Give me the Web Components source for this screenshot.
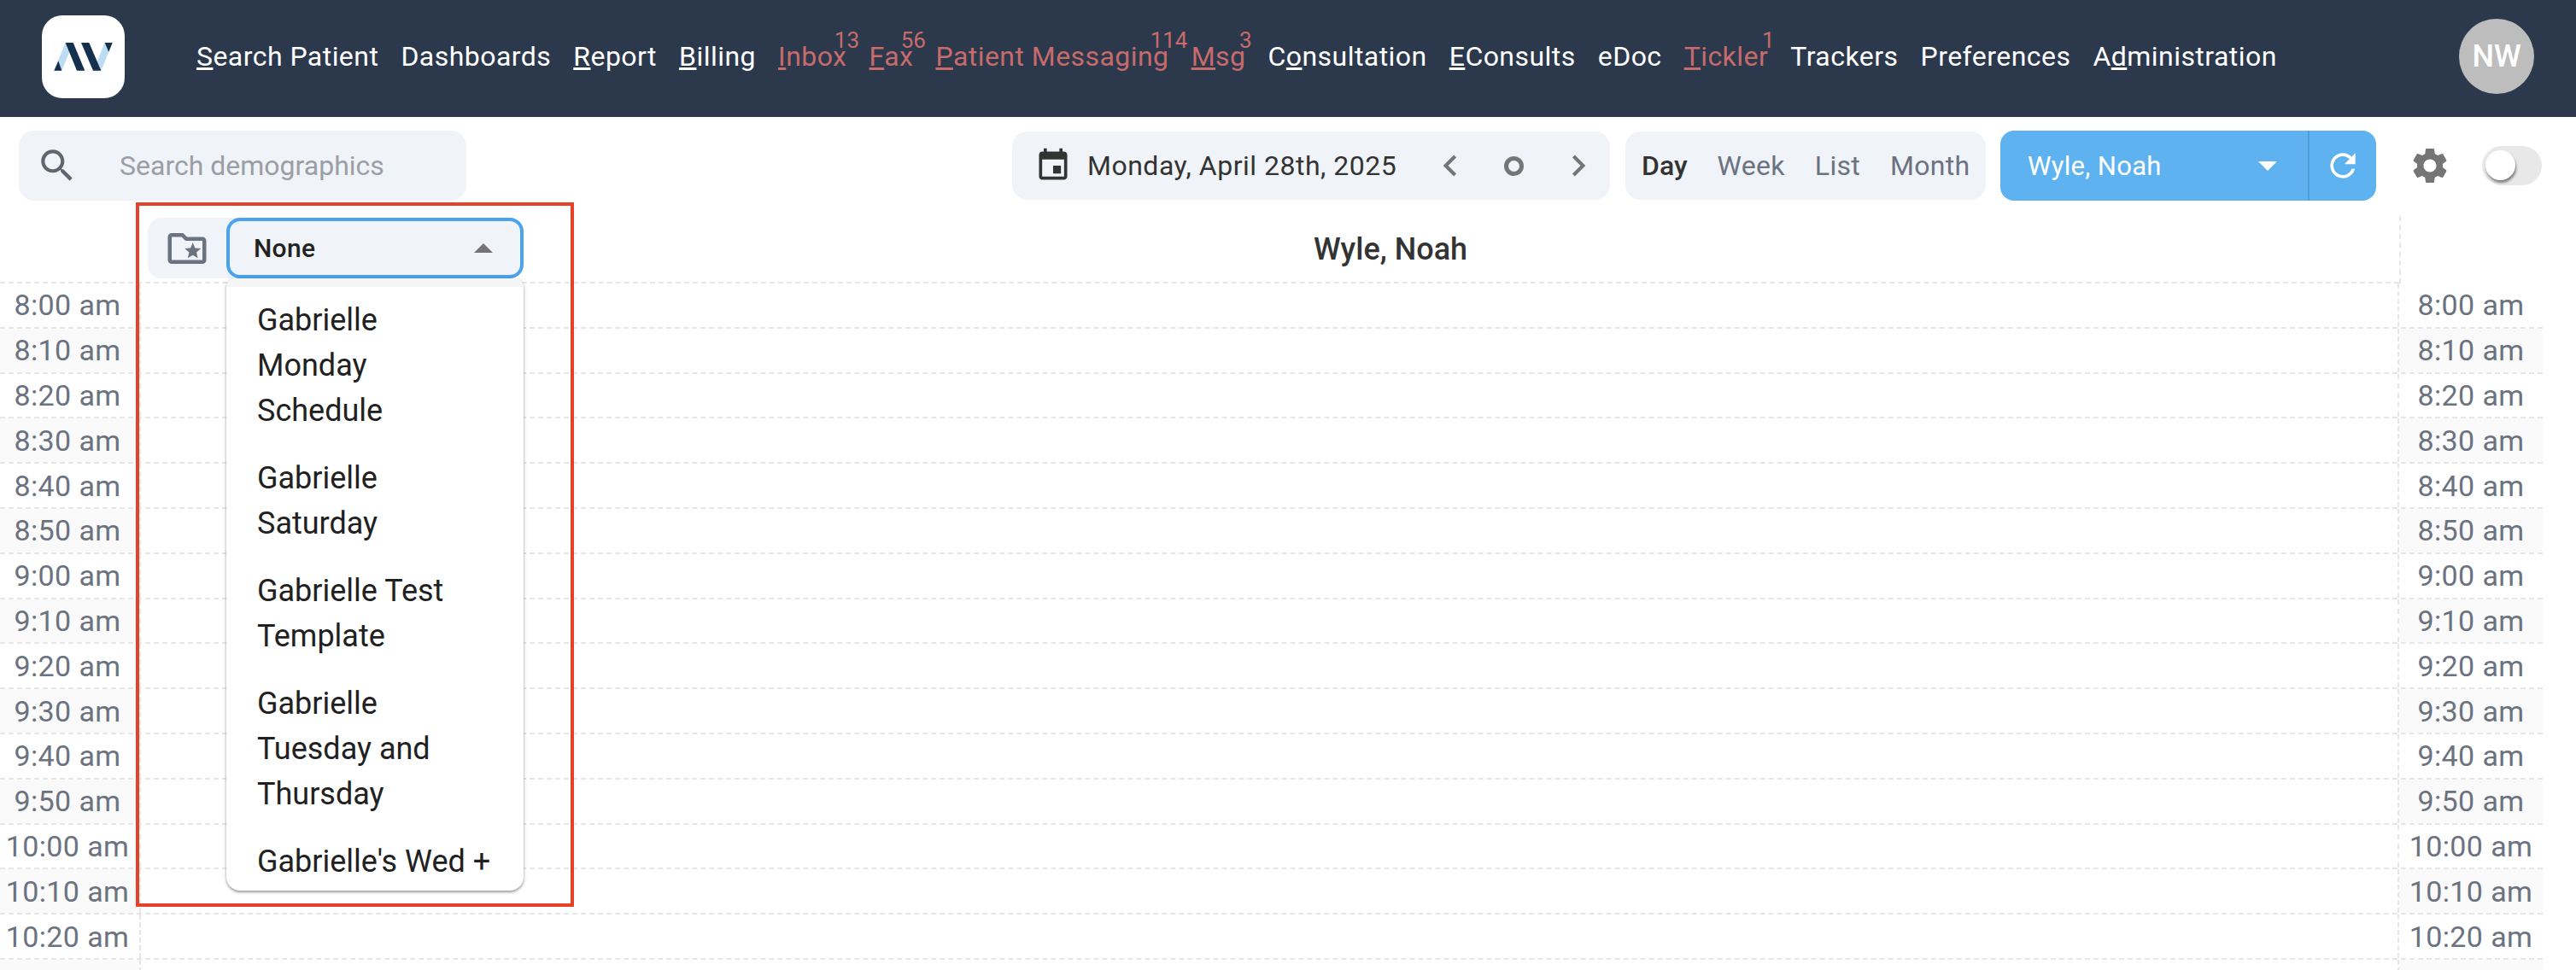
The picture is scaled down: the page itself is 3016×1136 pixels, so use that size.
<!DOCTYPE html>
<html lang="en">
<head>
<meta charset="utf-8">
<title>Schedule</title>
<style>
    html, body { margin: 0; height: 1136px; overflow: hidden; background: #fff; }
    body { font-family: Roboto, "Liberation Sans", sans-serif; position: relative; }
</style>
</head>
<body>

<app-header>
    <nav-item><u>S</u>earch Patient</nav-item>
    <nav-item>Dashboards</nav-item>
    <nav-item><u>R</u>eport</nav-item>
    <nav-item><u>B</u>illing</nav-item>
    <nav-item count="13"><u>I</u>nbox</nav-item>
    <nav-item count="56"><u>F</u>ax</nav-item>
    <nav-item count="114"><u>P</u>atient Messaging</nav-item>
    <nav-item count="3"><u>M</u>sg</nav-item>
    <nav-item>C<u>o</u>nsultation</nav-item>
    <nav-item><u>E</u>Consults</nav-item>
    <nav-item>eDoc</nav-item>
    <nav-item count="1"><u>T</u>ickler</nav-item>
    <nav-item>Trackers</nav-item>
    <nav-item>Preferences</nav-item>
    <nav-item>A<u>d</u>ministration</nav-item>
</app-header>

<tool-bar></tool-bar>

<schedule-grid>
    <template-picker slot="picker">
        <picker-option>Gabrielle Monday Schedule</picker-option>
        <picker-option>Gabrielle Saturday</picker-option>
        <picker-option>Gabrielle Test Template</picker-option>
        <picker-option>Gabrielle Tuesday and Thursday</picker-option>
        <picker-option>Gabrielle's Wed +</picker-option>
    </template-picker>
</schedule-grid>

<mark-box></mark-box>

<script>
const ICONS = {
    search: 'M15.5 14h-.79l-.28-.27C15.41 12.59 16 11.11 16 9.5 16 5.91 13.09 3 9.5 3S3 5.91 3 9.5 5.91 16 9.5 16c1.61 0 3.09-.59 4.23-1.57l.27.28v.79l5 4.99L20.49 19l-4.99-5zm-6 0C7.01 14 5 11.99 5 9.5S7.01 5 9.5 5 14 7.01 14 9.5 11.99 14 9.5 14z',
    event: 'M17 12h-5v5h5v-5zM16 1v2H8V1H6v2H5c-1.11 0-1.99.9-1.99 2L3 19c0 1.1.89 2 2 2h14c1.1 0 2-.9 2-2V5c0-1.1-.9-2-2-2h-1V1h-2zm3 18H5V8h14v11z',
    before: 'M15.41 7.41L14 6l-6 6 6 6 1.41-1.41L10.83 12z',
    next: 'M10 6L8.59 7.41 13.17 12l-4.58 4.59L10 18l6-6z',
    refresh: 'M17.65 6.35C16.2 4.9 14.21 4 12 4c-4.42 0-7.99 3.58-7.99 8s3.57 8 7.99 8c3.73 0 6.84-2.55 7.73-6h-2.08c-.82 2.33-3.04 4-5.65 4-3.31 0-6-2.69-6-6s2.69-6 6-6c1.66 0 3.14.69 4.22 1.78L13 11h7V4l-2.35 2.35z',
    gear: 'M19.14 12.94c.04-.3.06-.61.06-.94 0-.32-.02-.64-.07-.94l2.03-1.58c.18-.14.23-.41.12-.61l-1.92-3.32c-.12-.22-.37-.29-.59-.22l-2.39.96c-.5-.38-1.03-.7-1.62-.94l-.36-2.54c-.04-.24-.24-.41-.48-.41h-3.84c-.24 0-.43.17-.47.41l-.36 2.54c-.59.24-1.13.57-1.62.94l-2.39-.96c-.22-.08-.47 0-.59.22L2.74 8.87c-.12.21-.08.47.12.61l2.03 1.58c-.05.3-.09.63-.09.94s.02.64.07.94l-2.03 1.58c-.18.14-.23.41-.12.61l1.92 3.32c.12.22.37.29.59.22l2.39-.96c.5.38 1.03.7 1.62.94l.36 2.54c.05.24.24.41.48.41h3.84c.24 0 .44-.17.47-.41l.36-2.54c.59-.24 1.13-.56 1.62-.94l2.39.96c.22.08.47 0 .59-.22l1.92-3.32c.12-.22.07-.47-.12-.61l-2.01-1.58zM12 15.6c-1.98 0-3.6-1.62-3.6-3.6s1.62-3.6 3.6-3.6 3.6 1.62 3.6 3.6-1.62 3.6-3.6 3.6z',
    folder: 'M20 6h-8l-2-2H4c-1.1 0-1.99.9-1.99 2L2 18c0 1.1.9 2 2 2h16c1.1 0 2-.9 2-2V8c0-1.1-.9-2-2-2zm0 12H4V6h5.17l2 2H20v10zm-6.92-3.96L12.39 17 15 15.47 17.61 17l-.69-2.96 2.3-1.99-3.03-.26L15 9l-1.19 2.79-3.03.26z'
};

function icon(name, size, color) {
    return `<svg width="${size}" height="${size}" viewBox="0 0 24 24" fill="${color}" style="display:block;flex:none"><path d="${ICONS[name]}"/></svg>`;
}

class AppHeader extends HTMLElement {
    connectedCallback() {
        this.attachShadow({ mode: 'open' }).innerHTML = `
            <style>
                :host {
                    display: flex;
                    align-items: center;
                    box-sizing: border-box;
                    height: 137px;
                    padding: 0 49px 5px;
                    background: #2c384c;
                }
                .logo {
                    width: 97px;
                    height: 97px;
                    border-radius: 24px;
                    background: #fff;
                    flex: none;
                }
                nav { display: flex; gap: 26.1px; margin-left: 84px; }
                .avatar {
                    margin-left: auto;
                    width: 88px;
                    height: 88px;
                    border-radius: 50%;
                    background: #bdbdbd;
                    color: #fff;
                    font-size: 36px;
                    font-weight: 500;
                    display: flex;
                    align-items: center;
                    justify-content: center;
                }
            </style>
            <div class="logo">
                <svg width="97" height="97" viewBox="28 24 289 291" style="display:block">
                    <path fill="#bcdcf3" d="M70 218L110 120H137L97 218zM208 218L248 120H275L235 218z"/>
                    <path fill="#14304d" d="M110 120H137L178 218H150zM165 120H193L235 218H207zM70 218H97L85 184zM248 120H275L262 152z"/>
                </svg>
            </div>
            <nav><slot></slot></nav>
            <div class="avatar">NW</div>
        `;
    }
}
customElements.define('app-header', AppHeader);

class NavItem extends HTMLElement {
    connectedCallback() {
        const count = this.getAttribute('count');
        this.attachShadow({ mode: 'open' }).innerHTML = `
            <style>
                :host {
                    display: block;
                    position: relative;
                    font-size: 32px;
                    line-height: 36px;
                    letter-spacing: .45px;
                    white-space: nowrap;
                    color: ${count ? '#c76b6b' : '#fff'};
                }
                .count {
                    position: absolute;
                    right: 0;
                    top: -15px;
                    transform: translateX(50%);
                    font-size: 26px;
                    line-height: 28px;
                    letter-spacing: 0;
                }
            </style>
            <slot></slot>${count ? `<span class="count">${count}</span>` : ''}
        `;
    }
}
customElements.define('nav-item', NavItem);

class ToolBar extends HTMLElement {
    connectedCallback() {
        this.attachShadow({ mode: 'open' }).innerHTML = `
            <style>
                :host {
                    display: flex;
                    align-items: center;
                    box-sizing: border-box;
                    height: 82px;
                    margin-top: 16px;
                    padding: 0 40px 0 22px;
                    font-size: 32px;
                    letter-spacing: .3px;
                }
                .pill { background: #f0f3f8; border-radius: 18px; display: flex; align-items: center; }
                .search { width: 524px; height: 82px; color: #9b9ea6; margin-right: auto; padding-left: 20px; box-sizing: border-box; letter-spacing: 0; }
                .search span { margin-left: 48px; }
                .date { width: 700px; height: 80px; box-sizing: border-box; padding-left: 26px; color: #333; letter-spacing: .5px; }
                .date .label { margin-left: 18px; width: 400px; white-space: nowrap; }
                .date .nav { display: flex; align-items: center; }
                .ring { width: 23px; height: 23px; box-sizing: border-box; border: 5px solid #757575; border-radius: 50%; margin: 0 39px 0 38px; }
                .views { width: 422px; height: 80px; margin-left: 18px; padding-left: 19px; gap: 35px; box-sizing: border-box; color: #6b7280; }
                .views b { font-weight: 500; color: #333; letter-spacing: 0; }
                .provider { width: 440px; height: 82px; margin-left: 17px; background: #5eb2f0; border-radius: 16px; color: #fff; display: flex; align-items: center; box-sizing: border-box; font-size: 31px; }
                .provider .name { flex: 1; padding-left: 32px; display: flex; align-items: center; height: 100%; }
                .provider .name span { flex: 1; }
                .caret { width: 0; height: 0; border-left: 11px solid transparent; border-right: 11px solid transparent; border-top: 11px solid #fff; margin-right: 36px; }
                .provider .refresh { width: 80px; height: 100%; border-left: 2px solid #4f9fd9; box-sizing: border-box; display: flex; align-items: center; justify-content: center; }
                .gear { margin-left: 38px; }
                .toggle { width: 70px; height: 46px; margin-left: 36px; background: #e8e8e8; border-radius: 23px; position: relative; flex: none; }
                .thumb { position: absolute; left: 4px; top: 5px; width: 35px; height: 35px; border-radius: 50%; background: #fff; box-shadow: 1px 3px 3px rgba(0,0,0,.45); }
            </style>
            <div class="pill search">${icon('search', 50, '#5f6670')}<span>Search demographics</span></div>
            <div class="pill date">
                ${icon('event', 44, '#333')}
                <span class="label">Monday, April 28th, 2025</span>
                <div class="nav">
                    ${icon('before', 50, '#757575')}
                    <div class="ring"></div>
                    ${icon('next', 50, '#757575')}
                </div>
            </div>
            <div class="pill views"><b>Day</b><span>Week</span><span>List</span><span>Month</span></div>
            <div class="provider">
                <div class="name"><span>Wyle, Noah</span><div class="caret"></div></div>
                <div class="refresh">${icon('refresh', 44, '#fff')}</div>
            </div>
            <div class="gear">${icon('gear', 50, '#757575')}</div>
            <div class="toggle"><div class="thumb"></div></div>
        `;
    }
}
customElements.define('tool-bar', ToolBar);

class ScheduleGrid extends HTMLElement {
    connectedCallback() {
        const times = ['8:00 am', '8:10 am', '8:20 am', '8:30 am', '8:40 am', '8:50 am', '9:00 am', '9:10 am',
            '9:20 am', '9:30 am', '9:40 am', '9:50 am', '10:00 am', '10:10 am', '10:20 am', ''];
        const rows = times.map((t, i) => `
            <div class="row ${i % 2 ? 'alt' : ''}">
                <div class="time left">${t}</div>
                <div class="slot"></div>
                <div class="time right">${t}</div>
            </div>`).join('');
        this.attachShadow({ mode: 'open' }).innerHTML = `
            <style>
                :host { display: block; margin-top: 18px; margin-right: 39px; }
                .head { display: flex; height: 79px; }
                .head .main {
                    flex: 1;
                    display: flex;
                    align-items: center;
                    box-sizing: border-box;
                    padding-left: 173px;
                    border-bottom: 2px dashed #e6e6e6;
                }
                .head .title {
                    flex: 1;
                    text-align: center;
                    padding-right: 166px;
                    font-size: 36px;
                    font-weight: 500;
                    color: #333;
                }
                .head .side { width: 168px; box-sizing: border-box; border-left: 2px dashed #e6e6e6; }
                .row {
                    display: grid;
                    grid-template-columns: 163px 1fr 168px;
                    height: 52.8px;
                    box-sizing: border-box;
                    border-bottom: 2px dashed #e6e6e6;
                }
                .time {
                    display: flex;
                    align-items: center;
                    justify-content: center;
                    font-size: 34px;
                    letter-spacing: .4px;
                    color: #6b7280;
                    white-space: nowrap;
                }
                .left { padding-right: 5px; box-sizing: border-box; }
                .alt .time { background: #fafafa; }
                .slot { border-left: 2px dashed #e6e6e6; border-right: 2px dashed #e6e6e6; }
            </style>
            <div class="head">
                <div class="main">
                    <slot name="picker"></slot>
                    <div class="title">Wyle, Noah</div>
                </div>
                <div class="side"></div>
            </div>
            ${rows}
        `;
    }
}
customElements.define('schedule-grid', ScheduleGrid);

class TemplatePicker extends HTMLElement {
    connectedCallback() {
        this.attachShadow({ mode: 'open' }).innerHTML = `
            <style>
                :host {
                    display: flex;
                    position: relative;
                    flex: none;
                    align-self: flex-start;
                    width: 440px;
                    height: 71px;
                    margin-top: 2px;
                    background: #f0f3f8;
                    border-radius: 16px;
                    align-items: center;
                }
                .icon { width: 92px; display: flex; justify-content: center; flex: none; }
                .select {
                    flex: 1;
                    height: 100%;
                    box-sizing: border-box;
                    display: flex;
                    align-items: center;
                    justify-content: space-between;
                    padding: 0 32px 0 28px;
                    border: 4px solid #4aa3ef;
                    border-radius: 16px;
                    font-size: 30px;
                    font-weight: 500;
                    letter-spacing: .3px;
                    color: #212121;
                }
                .caret { width: 0; height: 0; border-left: 11px solid transparent; border-right: 11px solid transparent; border-bottom: 11px solid #757575; }
                .menu {
                    position: absolute;
                    left: 92px;
                    right: 0;
                    top: 71px;
                    height: 717px;
                    box-sizing: border-box;
                    border-top: 10px solid #f5f5f5;
                    background: #fff;
                    border-radius: 10px 10px 16px 16px;
                    overflow: hidden;
                    box-shadow: 0 2px 3px rgba(0,0,0,.35), 0 0 6px rgba(0,0,0,.1);
                    z-index: 2;
                }
            </style>
            <div class="icon">${icon('folder', 54, '#6b7280')}</div>
            <div class="select"><span>None</span><div class="caret"></div></div>
            <div class="menu"><slot></slot></div>
        `;
    }
}
customElements.define('template-picker', TemplatePicker);

class PickerOption extends HTMLElement {
    connectedCallback() {
        this.attachShadow({ mode: 'open' }).innerHTML = `
            <style>
                :host {
                    display: block;
                    padding: 13px 36px;
                    font-size: 36px;
                    line-height: 53px;
                    color: #212121;
                }
            </style>
            <slot></slot>
        `;
    }
}
customElements.define('picker-option', PickerOption);

class MarkBox extends HTMLElement {
    connectedCallback() {
        this.attachShadow({ mode: 'open' }).innerHTML = `
            <style>
                :host {
                    position: absolute;
                    left: 159px;
                    top: 237px;
                    width: 513px;
                    height: 825px;
                    box-sizing: border-box;
                    border: 4px solid #e8412a;
                    z-index: 3;
                }
            </style>
        `;
    }
}
customElements.define('mark-box', MarkBox);
</script>
</body>
</html>
